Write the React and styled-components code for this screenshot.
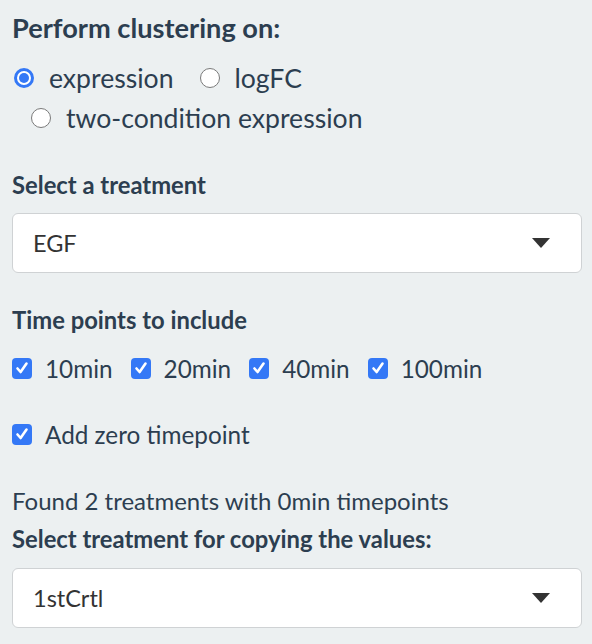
import React from "react";
import styled, { createGlobalStyle } from "styled-components";

const GlobalStyle = createGlobalStyle`
  html, body {
    margin: 0;
    padding: 0;
    background: #ecf0f1;
  }
  body {
    font-family: Lato, "Open Sans", sans-serif;
    color: #2c3e50;
  }
`;

const Panel = styled.div`
  padding: 12px 10px 0 12px;
  width: 570px;
`;

const Label = styled.div`
  font-weight: 700;
  font-size: ${(p) => p.$size || 23.8}px;
  line-height: 32px;
  margin-top: ${(p) => p.$top || 0}px;
`;

const Note = styled.div`
  font-size: 24px;
  line-height: 34px;
  margin-top: ${(p) => p.$top || 0}px;
`;

const RadioGroup = styled.div`
  display: flex;
  flex-wrap: wrap;
  margin-top: 14px;
`;

const RadioItem = styled.label`
  display: flex;
  align-items: center;
  gap: 15px;
  height: 40px;
  margin-right: 7px;
  font-size: 26.6px;
  padding-left: 2px;
  & + & {
    margin-left: 17px;
  }
`;

const RadioDot = styled.span`
  box-sizing: border-box;
  width: 20px;
  height: 20px;
  border-radius: 50%;
  flex: none;
  background: #fff;
  border: ${(p) => (p.$on ? "3px solid #3478f6" : "1.5px solid #7a7a7a")};
  display: flex;
  align-items: center;
  justify-content: center;
  &::after {
    content: "";
    display: ${(p) => (p.$on ? "block" : "none")};
    width: 10px;
    height: 10px;
    border-radius: 50%;
    background: #3478f6;
  }
`;

const SelectBox = styled.div`
  box-sizing: border-box;
  margin-top: ${(p) => p.$top || 12}px;
  height: 60px;
  background: #fff;
  border: 1px solid #cfd2d4;
  border-radius: 6px;
  display: flex;
  align-items: center;
  justify-content: space-between;
  padding: 0 31px 0 20px;
  font-size: 23.5px;
  color: #333;
`;

const CheckRow = styled.div`
  display: flex;
  align-items: center;
  gap: 18px;
  height: 40px;
  margin-top: ${(p) => p.$top || 0}px;
`;

const CheckItem = styled.label`
  display: flex;
  align-items: center;
  gap: 13px;
  font-size: 24.3px;
`;

const Box = styled.span`
  width: 20px;
  height: 21px;
  border-radius: 4px;
  background: #3478f6;
  display: flex;
  align-items: center;
  justify-content: center;
  flex: none;
`;

const Check = () => (
  <Box>
    <svg width="14" height="14" viewBox="0 0 14 14">
      <path d="M2.5 7.5 L5.6 11 L11.5 2.5" fill="none" stroke="#fff" strokeWidth="2.6" strokeLinecap="round" strokeLinejoin="round" />
    </svg>
  </Box>
);

const Caret = () => (
  <svg width="18" height="10" viewBox="0 0 18 10">
    <path d="M0 0 H18 L9 10 Z" fill="#333" />
  </svg>
);

const Select = ({ value, top }) => (
  <SelectBox $top={top}>
    <span>{value}</span>
    <Caret />
  </SelectBox>
);

export default function App() {
  return (
    <Panel>
      <GlobalStyle />
      <Label $size={27.2}>Perform clustering on:</Label>
      <RadioGroup>
        <RadioItem><RadioDot $on />expression</RadioItem>
        <RadioItem><RadioDot />logFC</RadioItem>
        <RadioItem><RadioDot />two-condition expression</RadioItem>
      </RadioGroup>

      <Label $top={31}>Select a treatment</Label>
      <Select value="EGF" />

      <Label $top={31}>Time points to include</Label>
      <CheckRow $top={12}>
        {["10min", "20min", "40min", "100min"].map((t) => (
          <CheckItem key={t}><Check />{t}</CheckItem>
        ))}
      </CheckRow>
      <CheckRow $top={26}>
        <CheckItem><Check />Add zero timepoint</CheckItem>
      </CheckRow>

      <Note $top={30}>Found 2 treatments with 0min timepoints</Note>
      <Label $top={5}>Select treatment for copying the values:</Label>
      <Select value="1stCrtl" top={13} />
    </Panel>
  );
}
